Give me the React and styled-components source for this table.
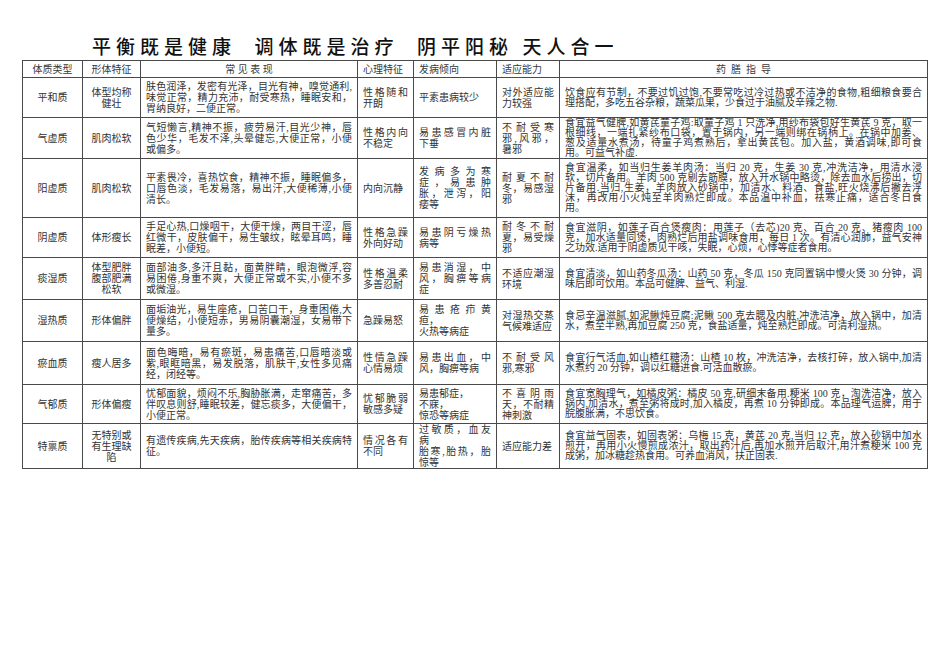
import React from "react";
import styled, { createGlobalStyle } from "styled-components";

const GlobalStyle = createGlobalStyle`
  html, body {
    margin: 0;
    padding: 0;
    background: #ffffff;
  }
  body {
    font-family: "Liberation Serif", "Noto Sans CJK SC", serif;
    color: #222;
  }
`;

const Page = styled.div`
  width: 950px;
  height: 672px;
  padding: 35px 0 0 22px;
  box-sizing: border-box;
`;

const Title = styled.h1`
  margin: 0 0 3px 70px;
  height: 22px;
  line-height: 22px;
  font-family: "Noto Sans CJK SC", sans-serif;
  font-size: 19px;
  font-weight: 500;
  letter-spacing: 5px;
  white-space: pre;
  color: #111;
`;

const Table = styled.table`
  border-collapse: collapse;
  table-layout: fixed;
  width: 905px;
  font-size: 10px;
  color: #333;
`;

const Row = styled.tr`
  height: ${(p) => p.$h}px;
`;

const Cell = styled.td`
  border: 1px solid #4a4a4a;
  padding: 0 5px;
  vertical-align: middle;
  line-height: ${(p) => (p.$tight ? "10px" : "11px")};
  text-align: ${(p) => (p.$center ? "center" : "left")};
  overflow: hidden;
`;

const Head = styled.th`
  border: 1px solid #4a4a4a;
  padding: 0 5px;
  font-weight: 400;
  line-height: 15px;
  text-align: ${(p) => (p.$center ? "center" : "left")};
  white-space: pre;
  color: #3a3a3a;
`;

const Line = styled.div`
  text-align: ${(p) => (p.$justify ? "justify" : "inherit")};
  text-align-last: ${(p) => (p.$justify ? "justify" : "auto")};
`;

const widths = [60, 58, 217, 56, 83, 63, 368];

const heads = [
  { t: "体质类型", c: true },
  { t: "形体特征", c: true },
  { t: "常 见 表 现", c: true },
  { t: "心理特征" },
  { t: "发病倾向" },
  { t: "适应能力" },
  { t: "药  膳  指  导", c: true },
];

const rows = [
  {
    h: 40,
    type: "平和质",
    shape: "体型均称\n健壮",
    sign: "肤色润泽，发密有光泽，目光有神，嗅觉通利,|味觉正常，精力充沛，耐受寒热，睡眠安和，|胃纳良好，二便正常。",
    mind: "性格随和|开朗",
    ill: "平素患病较少",
    adapt: "对外适应能|力较强",
    diet: "饮食应有节制，不要过饥过饱,不要常吃过冷过热或不洁净的食物,粗细粮食要合|理搭配，多吃五谷杂粮，蔬菜瓜果，少食过于油腻及辛辣之物.",
  },
  {
    h: 40,
    type: "气虚质",
    shape: "肌肉松软",
    sign: "气短懒言,精神不振，疲劳易汗,目光少神，唇|色少华，毛发不泽,头晕健忘,大便正常，小便|或偏多。",
    mind: "性格内向|不稳定",
    ill: "易患感冒内脏|下垂",
    adapt: "不耐受寒|邪,风邪，|暑邪",
    diet: "食宜益气健脾,如黄芪童子鸡:取童子鸡 1 只洗净,用纱布袋包好生黄芪 9 克，取一|根细线，一端扎紧纱布口袋，置于锅内，另一端则绑在锅柄上。在锅中加姜、|葱及适量水煮汤，待童子鸡煮熟后，拿出黄芪包。加入盐，黄酒调味,即可食|用。可益气补虚.",
  },
  {
    h: 59,
    type: "阳虚质",
    shape: "肌肉松软",
    sign: "平素畏冷，喜热饮食，精神不振，睡眠偏多，|口唇色淡，毛发易落，易出汗,大便稀薄,小便|清长。",
    mind: "内向沉静",
    ill: "发病多为寒|症，易患肿|胀，泄泻，阳|痿等",
    adapt: "耐夏不耐|冬，易感湿|邪",
    diet: "食宜温柔，如当归生姜羊肉汤：当归 20 克，生姜 30 克,冲洗洁净，用清水浸|软，切片备用。羊肉 500 克剔去筋膜，放入开水锅中略烫，除去血水后捞出，切|片备用.当归,生姜，羊肉放入砂锅中，加清水、料酒、食盐,旺火烧沸后撇去浮|沫，再改用小火炖至羊肉熟烂即成。本品温中补血，祛寒止痛，适合冬日食|用。",
  },
  {
    h: 40,
    type: "阴虚质",
    shape: "体形瘦长",
    sign: "手足心热,口燥咽干，大便干燥，两目干涩，唇|红微干，皮肤偏干，易生皱纹，眩晕耳鸣，睡|眠差，小便短。",
    mind: "性格急躁|外向好动",
    ill: "易患阴亏燥热|病等",
    adapt: "耐冬不耐|夏，易受燥|邪",
    diet: "食宜滋阴，如莲子百合煲瘦肉：用莲子（去芯)20 克、百合 20 克、猪瘦肉 100|克，加水适量同煲，肉熟烂后用盐调味食用，每日 1 次。有清心润肺，益气安神|之功效.适用于阴虚质见干咳，失眠，心烦，心悸等症者食用。",
  },
  {
    h: 42,
    type: "痰湿质",
    shape: "体型肥胖\n腹部肥满\n松软",
    sign: "面部油多,多汗且黏，面黄胖睛，眼泡微浮,容|易困倦,身重不爽，大便正常或不实,小便不多|或微湿。",
    mind: "性格温柔|多善忍耐",
    ill: "易患消湿，中|风，胸痹等病|症",
    adapt: "不适应潮湿|环境",
    diet: "食宜清淡，如山药冬瓜汤：山药 50 克，冬瓜 150 克同置锅中慢火煲 30 分钟，调|味后即可饮用。本品可健脾、益气、利湿.",
  },
  {
    h: 42,
    type: "湿热质",
    shape: "形体偏胖",
    sign: "面垢油光，易生座疮，口苦口干，身重困倦,大|便燥结，小便短赤，男易阴囊潮湿，女易带下|量多。",
    mind: "急躁易怒",
    ill: "易患疮疖黄|疸，\n火热等病症",
    adapt: "对湿热交蒸|气候难适应",
    diet: "食忌辛温滋腻,如泥鳅炖豆腐:泥鳅 500 克去腮及内脏,冲洗洁净，放入锅中，加清|水，煮至半熟,再加豆腐 250 克，食盐适量，炖至熟烂即成。可清利湿热。",
  },
  {
    h: 43,
    type: "瘀血质",
    shape: "瘦人居多",
    sign: "面色晦暗，易有瘀斑，易患痛苦,口唇暗淡或|紫,眼眶暗黑，易发脱落，肌肤干,女性多见痛|经，闭经等。",
    mind: "性情急躁|心情易烦",
    ill: "易患出血，中|风，胸痹等病",
    adapt: "不耐受风|邪,寒邪",
    diet: "食宜行气活血,如山楂红糖汤：山楂 10 枚，冲洗洁净，去核打碎，放入锅中,加清|水煮约 20 分钟，调以红糖进食.可活血散瘀。",
  },
  {
    h: 39,
    type: "气郁质",
    shape: "形体偏瘦",
    sign: "忧郁面貌，烦闷不乐,胸胁胀满，走窜痛苦，多|伴叹息则舒,睡眠较差，健忘痰多，大便偏干，|小便正常。",
    mind: "忧郁脆弱|敏感多疑",
    ill: "易患郁症，\n不寐，\n惊恐等病症",
    adapt: "不喜阴雨|天，不耐精|神刺激",
    diet: "食宜宽胸理气，如橘皮粥：橘皮 50 克,研细末备用.粳米 100 克，淘洗洁净，放入|锅内,加清水，煮至粥将成时,加入橘皮，再煮 10 分钟即成。本品理气运脾，用于|脘腹胀满，不思饮食。",
  },
  {
    h: 44,
    type: "特禀质",
    shape: "无特别或\n有生理缺\n陷",
    sign: "有遗传疾病,先天疾病，胎传疾病等相关疾病特|征。",
    mind: "情况各有|不同",
    ill: "过敏质，血友|病\n胎寒,胎热，胎|惊等",
    adapt: "适应能力差",
    diet: "食宜益气固表，如固表粥：乌梅 15 克，黄芪 20 克,当归 12 克，放入砂锅中加水|煎开，再用小火慢煎成浓汁，取出药汁后,再加水煎开后取汁,用汁煮粳米 100 克|成粥，加冰糖趁热食用。可养血消风，扶正固表.",
  },
];

// "\n" = hard break, "|" = soft wrap (justified line)
const Text = ({ value }) =>
  value.split("\n").map((para, pi) => {
    const lines = para.split("|");
    return lines.map((l, i) => (
      <Line key={pi + "-" + i} $justify={i < lines.length - 1}>
        {l}
      </Line>
    ));
  });

export default function App() {
  return (
    <Page lang="zh-CN">
      <GlobalStyle />
      <Title>{"平衡既是健康  调体既是治疗  阴平阳秘 天人合一"}</Title>
      <Table>
        <colgroup>
          {widths.map((w, i) => (
            <col key={i} style={{ width: w }} />
          ))}
        </colgroup>
        <thead>
          <Row $h={17}>
            {heads.map((h) => (
              <Head key={h.t} $center={h.c}>
                {h.t}
              </Head>
            ))}
          </Row>
        </thead>
        <tbody>
          {rows.map((r) => (
            <Row key={r.type} $h={r.h}>
              <Cell $center>{r.type}</Cell>
              <Cell $center>
                <Text value={r.shape} />
              </Cell>
              <Cell>
                <Text value={r.sign} />
              </Cell>
              <Cell>
                <Text value={r.mind} />
              </Cell>
              <Cell>
                <Text value={r.ill} />
              </Cell>
              <Cell>
                <Text value={r.adapt} />
              </Cell>
              <Cell $tight>
                <Text value={r.diet} />
              </Cell>
            </Row>
          ))}
        </tbody>
      </Table>
    </Page>
  );
}
